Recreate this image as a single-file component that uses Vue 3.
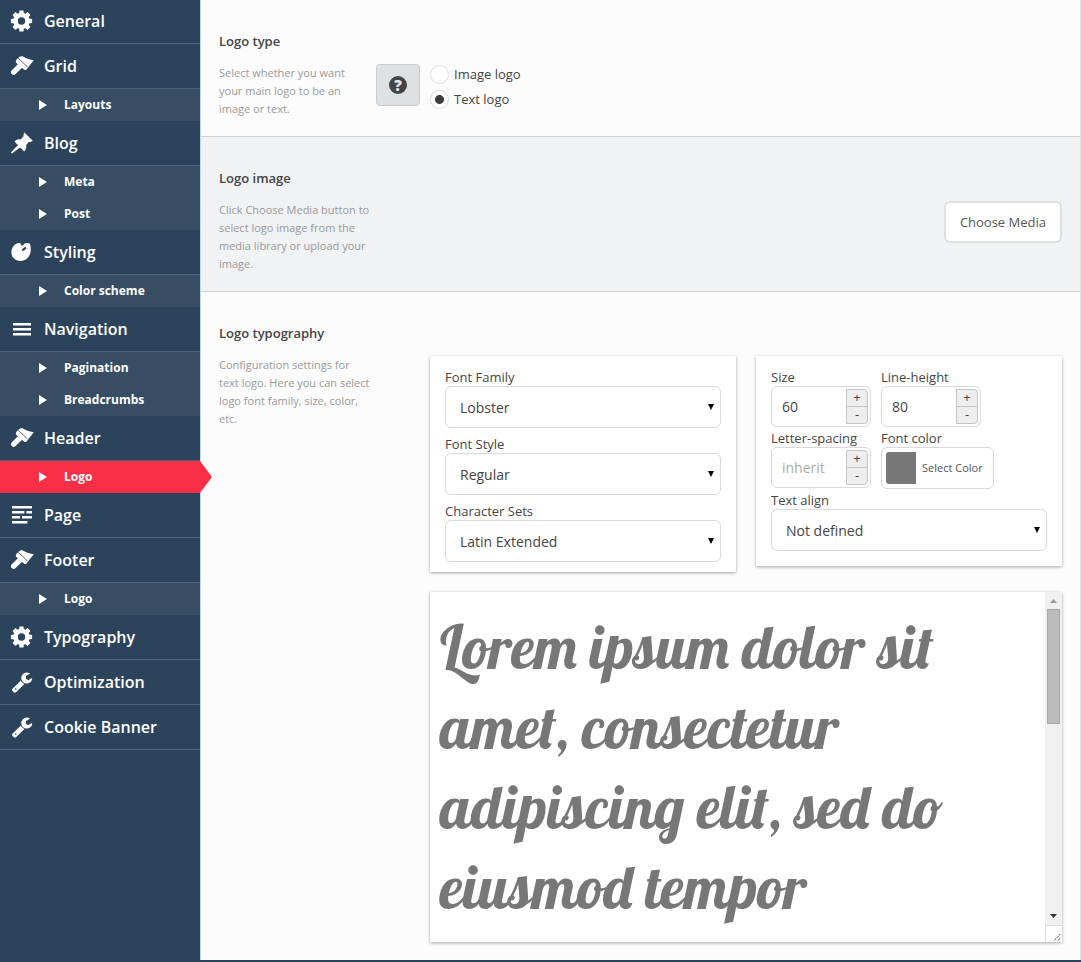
<script setup>
import { ref } from 'vue'

const menu = [
  { label: 'General', icon: 'gear' },
  { label: 'Grid', icon: 'brush', children: ['Layouts'] },
  { label: 'Blog', icon: 'pin', children: ['Meta', 'Post'] },
  { label: 'Styling', icon: 'palette', children: ['Color scheme'] },
  { label: 'Navigation', icon: 'bars', children: ['Pagination', 'Breadcrumbs'] },
  { label: 'Header', icon: 'brush', children: ['Logo'] },
  { label: 'Page', icon: 'page' },
  { label: 'Footer', icon: 'brush', children: ['Logo'] },
  { label: 'Typography', icon: 'gear' },
  { label: 'Optimization', icon: 'wrench' },
  { label: 'Cookie Banner', icon: 'wrench' }
]
const active = ref('Header/Logo')

const logoType = ref('text')
const size = ref('60')
const lineHeight = ref('80')
const spacing = ref('')
const fontSelects = [
  { id: 'font-family', label: 'Font Family', value: 'Lobster' },
  { id: 'font-style', label: 'Font Style', value: 'Regular' },
  { id: 'char-sets', label: 'Character Sets', value: 'Latin Extended' }
]
const preview = ref('Lorem ipsum dolor sit amet, consectetur adipiscing elit, sed do eiusmod tempor')

function step(model, by) {
  return String((parseInt(model, 10) || 0) + by)
}
</script>

<template>
  <div class="layout">
    <nav class="sidebar">
      <ul class="menu">
        <li v-for="item in menu" :key="item.label">
          <a href="#" class="item">
            <svg class="icon" viewBox="0 0 24 24" width="24" height="24" aria-hidden="true">
              <g v-if="item.icon === 'gear'" fill="#fff">
                <circle cx="11.5" cy="12" r="6" fill="none" stroke="#fff" stroke-width="4.6" />
                <g v-for="a in [0, 45, 90, 135, 180, 225, 270, 315]" :key="a" :transform="`rotate(${a} 11.5 12)`">
                  <path d="M9 5.5L9.5 1.4H13.5L14 5.5Z" />
                </g>
              </g>
              <g v-else-if="item.icon === 'brush'">
                <path d="M3.700 18.200L10.500 11.500" stroke="#fff" stroke-width="5.400" stroke-linecap="round" />
                <path d="M5.900 8.400Q5.500 7 6.600 5.600L9.600 2.800Q10.800 1.800 12.400 2.300L16.800 4.600Q20.200 5.900 23.800 6.300L20.200 10.800L16.600 15.400Q15.600 16.600 14.200 15.800Z" fill="#fff" />
                <path d="M8.200 4.200L17.600 13" stroke="#2b435b" stroke-width="0.8" />
              </g>
              <path v-else-if="item.icon === 'pin'" fill="#fff" d="M14.400 1.600Q13 3.200 13.600 5.200L10.600 8.400Q7 7.600 4.400 10.400L8 14L0.900 21.400L1.800 22.600L10.200 16.400L14.200 20.400Q17 17.400 16.200 13.800L19.200 10.800Q21.200 11.400 22.800 9.800Z" />
              <g v-else-if="item.icon === 'palette'">
                <path fill="#fff" d="M9.6 3C11 3.2 10.8 4.400 11.200 5.400C12.400 6 13 5.200 14 4.200C15.4 2.8 19.4 2.6 20.2 4.6C21.6 10.6 20.4 15.4 17.4 18.2C13.8 21.4 7.6 22 4 18.6C.4 15 .8 9.6 3.4 6.2C5.2 4 7.6 2.8 9.6 3Z" />
                <ellipse cx="14.2" cy="9" rx="2.6" ry="1.2" transform="rotate(-35 14.2 9)" fill="#2b435b" />
              </g>
              <path v-else-if="item.icon === 'bars'" fill="#fff" d="M3 6h18v2.4H3zM3 11h18v2.4H3zM3 16h18v2.4H3z" />
              <path v-else-if="item.icon === 'page'" fill="#fff" d="M2 3h20v2.6H2zM2 8h12.4v2.6H2zM16.4 8H22v2.6h-5.600zM2 13h8v2.6H2zM12 13h10v2.600H12zM2 18h15.400v2.600H2z" />
              <svg v-else x="1" y="1" width="22" height="22" viewBox="0 0 1792 1792">
                <path fill="#fff" d="M448 1472q0-26-19-45t-45-19-45 19-19 45 19 45 45 19 45-19 19-45zm644-420l-682 682q-37 37-90 37-52 0-91-37l-106-108q-38-36-38-90 0-53 38-91l681-681q39 98 114.500 173.500t173.500 114.500zm634-435q0 39-23 106-47 134-164.500 217.500t-258.500 83.500q-185 0-316.500-131.500t-131.500-316.500 131.500-316.500 316.500-131.500q58 0 121.500 16.500t107.500 46.500q16 11 16 28t-16 28l-293 169v224l193 107q5-3 79-48.500t135.500-81 70.500-35.500q15 0 23.500 10t8.500 25z" />
              </svg>
            </svg>
            <span>{{ item.label }}</span>
          </a>
          <ul v-if="item.children" class="submenu">
            <li v-for="child in item.children" :key="child">
              <a
                href="#"
                class="subitem"
                :class="{ active: active === item.label + '/' + child }"
                @click.prevent="active = item.label + '/' + child"
              >
                <svg class="caret" viewBox="0 0 8 10" width="8" height="10" aria-hidden="true"><path d="M0 0L8 5L0 10Z" fill="#fff" /></svg>
                <span>{{ child }}</span>
              </a>
            </li>
          </ul>
        </li>
      </ul>
    </nav>

    <main class="content">
      <section class="option">
        <h2>Logo type</h2>
        <div class="row">
          <p class="hint">Select whether you want your main logo to be an image or text.</p>
          <div class="aside">
            <button type="button" class="help" aria-label="Help"><span class="mark">?</span></button>
          </div>
          <div class="radios">
            <label class="radio"><input v-model="logoType" type="radio" name="logo-type" value="image" />Image logo</label>
            <label class="radio"><input v-model="logoType" type="radio" name="logo-type" value="text" />Text logo</label>
          </div>
        </div>
      </section>

      <section class="option tinted">
        <h2>Logo image</h2>
        <div class="row">
          <p class="hint">Click Choose Media button to select logo image from the media library or upload your image.</p>
          <div class="fill end">
            <button type="button" class="media">Choose Media</button>
          </div>
        </div>
      </section>

      <section class="option last">
        <h2>Logo typography</h2>
        <div class="row">
          <p class="hint">Configuration settings for text logo. Here you can select logo font family, size, color, etc.</p>
          <div class="aside"></div>
          <div class="fill">
            <div class="panels">
              <div class="panel fonts">
                <div v-for="s in fontSelects" :key="s.id" class="field">
                  <label :for="s.id">{{ s.label }}</label>
                  <div class="select">
                    <select :id="s.id"><option>{{ s.value }}</option></select>
                    <svg class="arrow" viewBox="0 0 6 6" width="6" height="6" aria-hidden="true"><path d="M0 0H6L3 6Z" /></svg>
                  </div>
                </div>
              </div>

              <div class="panel metrics">
                <div class="pair">
                  <div class="field">
                    <label for="size">Size</label>
                    <div class="number">
                      <input id="size" v-model="size" type="text" />
                      <div class="steps">
                        <button type="button" @click="size = step(size, 1)">+</button>
                        <button type="button" @click="size = step(size, -1)">-</button>
                      </div>
                    </div>
                  </div>
                  <div class="field">
                    <label for="line-height">Line-height</label>
                    <div class="number">
                      <input id="line-height" v-model="lineHeight" type="text" />
                      <div class="steps">
                        <button type="button" @click="lineHeight = step(lineHeight, 1)">+</button>
                        <button type="button" @click="lineHeight = step(lineHeight, -1)">-</button>
                      </div>
                    </div>
                  </div>
                </div>
                <div class="pair">
                  <div class="field">
                    <label for="spacing">Letter-spacing</label>
                    <div class="number">
                      <input id="spacing" v-model="spacing" type="text" placeholder="inherit" />
                      <div class="steps">
                        <button type="button" @click="spacing = step(spacing, 1)">+</button>
                        <button type="button" @click="spacing = step(spacing, -1)">-</button>
                      </div>
                    </div>
                  </div>
                  <div class="field">
                    <label for="color">Font color</label>
                    <button id="color" type="button" class="color"><span class="swatch"></span>Select Color</button>
                  </div>
                </div>
                <div class="field">
                  <label for="align">Text align</label>
                  <div class="select">
                    <select id="align"><option>Not defined</option></select>
                    <svg class="arrow" viewBox="0 0 6 6" width="6" height="6" aria-hidden="true"><path d="M0 0H6L3 6Z" /></svg>
                  </div>
                </div>
              </div>
            </div>

            <div class="preview">
              <textarea v-model="preview" aria-label="Preview text" spellcheck="false"></textarea>
              <div class="scroll" aria-hidden="true">
                <svg viewBox="0 0 17 17" width="17" height="17"><path d="M5 11H12L8.500 7Z" fill="#999" /></svg>
                <div class="track"><div class="thumb"></div></div>
                <svg viewBox="0 0 17 17" width="17" height="17"><path d="M5 6H12L8.500 10Z" fill="#333" /></svg>
                <svg class="grip" viewBox="0 0 17 17" width="17" height="17"><path d="M8.500 15.500L15.500 8.500M12.500 15.500L15.500 12.500" stroke="#333" stroke-dasharray="1.400 0.400" /></svg>
              </div>
            </div>
          </div>
        </div>
      </section>
    </main>
  </div>
</template>

<style>
body {
  margin: 0;
}
</style>

<style scoped>
* {
  box-sizing: border-box;
}
.layout {
  display: flex;
  min-height: 100vh;
  background: #2b435b;
  color: #444;
  font: 13px/18px "Open Sans", "Noto Sans", sans-serif;
}
button,
input,
select {
  font: inherit;
  color: inherit;
  margin: 0;
}
.sidebar {
  flex: 0 0 200px;
}
.menu,
.submenu {
  list-style: none;
  margin: 0;
  padding: 0;
}
.menu {
  margin-top: -1px;
}
.item,
.subitem {
  display: flex;
  align-items: center;
  color: #fff;
  text-decoration: none;
}
.item {
  height: 45px;
  padding: 0 10px;
  gap: 10px;
  border-bottom: 1px solid #4c6680;
  font-size: 16px;
  font-weight: 600;
}
.subitem {
  position: relative;
  height: 32px;
  padding-left: 39px;
  gap: 17px;
  background: #364d64;
  font-size: 12px;
  font-weight: 700;
}
.subitem.active {
  background: #f92f48;
}
.subitem.active::after {
  content: "";
  position: absolute;
  left: 100%;
  top: 0;
  width: 12px;
  height: 100%;
  background: #f92f48;
  clip-path: polygon(0 0, 100% 50%, 0 100%);
}
.content {
  flex: 1;
  min-width: 0;
  margin-bottom: 2px;
  background: #fcfcfc;
  border-left: 1px solid #c9d6e8;
  border-right: 1px solid #e2e2e2;
}
.option {
  padding: 32px 18px 18px;
  border-bottom: 1px solid #d0d3d6;
}
.option.tinted {
  background: #f0f2f4;
}
.option.last {
  border-bottom: 0;
}
h2 {
  margin: 0 0 14px;
  font-size: 13px;
  line-height: 18px;
  font-weight: 600;
}
.row {
  display: flex;
  align-items: flex-start;
}
.hint {
  flex: 0 0 157px;
  margin: 0;
  padding-right: 6px;
  font-size: 11px;
  color: #999;
}
.aside {
  flex: 0 0 54px;
}
.fill {
  flex: 1;
  min-width: 0;
}
.end {
  display: flex;
  justify-content: flex-end;
}
.help {
  display: flex;
  align-items: center;
  justify-content: center;
  width: 44px;
  height: 42px;
  padding: 0;
  border: 1px solid #c8cacc;
  border-radius: 4px;
  background: #dee1e4;
}
.mark {
  width: 18px;
  height: 18px;
  border-radius: 50%;
  background: #444;
  color: #e6e8ea;
  font-size: 15px;
  font-weight: 800;
  line-height: 18px;
}
.radios {
  display: flex;
  flex-direction: column;
  gap: 5px;
}
.radio {
  display: flex;
  align-items: center;
  gap: 5px;
  height: 20px;
}
.radio input {
  appearance: none;
  width: 19px;
  height: 19px;
  border: 1px solid #ddd;
  border-radius: 50%;
  background: #fff;
}
.radio input:checked {
  background: radial-gradient(circle, #3d3d3d 4px, #fff 5px);
}
.media {
  height: 42px;
  padding: 0 14px;
  border: 2px solid #dcdee0;
  border-radius: 6px;
  background: #fff;
  color: #555;
}
.panels {
  display: grid;
  grid-template-columns: 1fr 1fr;
  align-items: start;
  gap: 20px;
  margin-bottom: 20px;
}
.panel,
.preview {
  background: #fff;
  box-shadow: 0 1px 3px rgba(0, 0, 0, 0.35);
}
.panel {
  display: flex;
  flex-direction: column;
}
.fonts {
  gap: 7px;
  padding: 12px 15px 10px;
}
.metrics {
  gap: 2px;
  padding: 12px 15px 15px;
}
.pair {
  display: flex;
  gap: 10px;
}
.field label {
  display: block;
}
.select {
  position: relative;
}
select {
  appearance: none;
  display: block;
  width: 100%;
  height: 42px;
  padding: 2px 24px 0 14px;
  border: 1px solid #d9d9d9;
  border-radius: 6px;
  background: #fff;
  font-size: 14px;
}
.arrow {
  position: absolute;
  right: 7px;
  top: 18px;
  pointer-events: none;
}
.number {
  display: flex;
  width: 100px;
  height: 41px;
  padding: 2px;
  border: 1px solid #d9d9d9;
  border-radius: 6px;
  background: #fff;
}
.number input {
  flex: 1;
  min-width: 0;
  padding: 0 0 0 8px;
  border: 0;
  outline: 0;
  background: none;
  font-size: 14px;
}
.number input::placeholder {
  color: #aaa;
}
.steps {
  flex: 0 0 22px;
  display: flex;
  flex-direction: column;
  border: 1px solid #c4c4c4;
  border-radius: 0 4px 4px 0;
  background: #eee;
}
.steps button {
  flex: 1;
  min-height: 0;
  padding: 0 0 3px;
  border: 0;
  background: none;
  line-height: 14px;
}
.steps button + button {
  border-top: 1px solid #c4c4c4;
}
.color {
  display: flex;
  align-items: center;
  gap: 6px;
  height: 42px;
  padding: 0 10px 0 4px;
  border: 1px solid #d9d9d9;
  border-radius: 6px;
  background: #fff;
  color: #555;
  font-size: 11px;
}
.swatch {
  width: 30px;
  height: 32px;
  border-radius: 3px 0 0 3px;
  background: #777;
}
.preview {
  display: flex;
  height: 350px;
}
textarea {
  flex: 1;
  min-width: 0;
  margin: 0;
  padding: 15px 10px 0;
  border: 0;
  outline: 0;
  resize: none;
  overflow: hidden;
  background: none;
  color: #777;
  font: 400 60px/80px Lobster, "Liberation Serif", serif;
}
.scroll {
  flex: 0 0 17px;
  display: flex;
  flex-direction: column;
  background: #f0f0f0;
}
.track {
  flex: 1;
  padding: 0 2px;
}
.thumb {
  height: 115px;
  border: 1px solid #a8a8a8;
  background: #bcbcbc;
}
.grip {
  background: #fff;
  border-top: 1px solid #ddd;
  border-left: 1px solid #ddd;
}
</style>
